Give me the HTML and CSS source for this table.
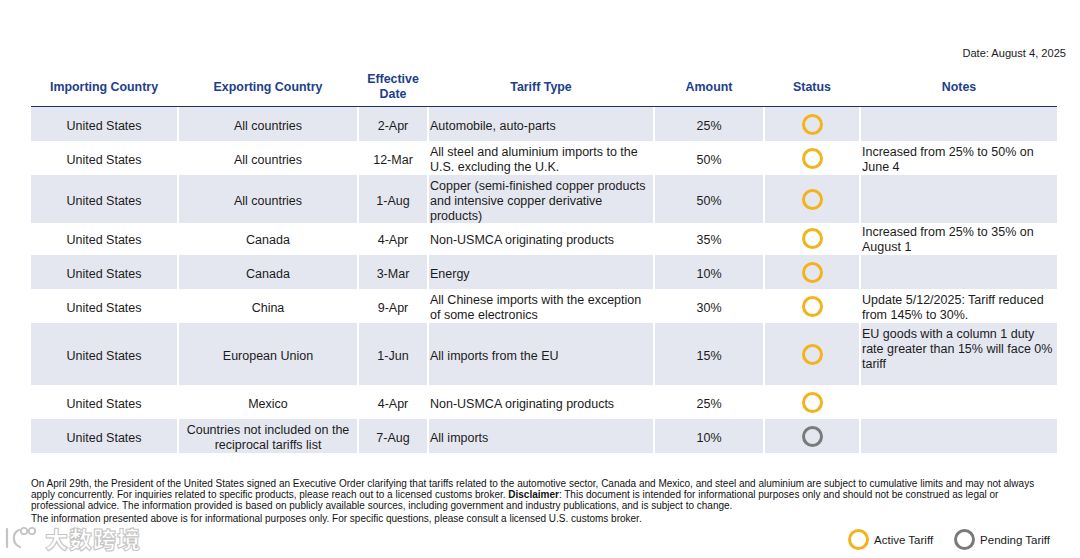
FILE: index.html
```html
<!DOCTYPE html>
<html lang="en">
<head>
<meta charset="utf-8">
<title>Tariff Tracker</title>
<link rel="stylesheet" href="styles.css">
</head>
<body>
<div class="page">
  <div class="date">Date: August 4, 2025</div>

  <div class="table">
    <div class="row head">
      <div class="cell">Importing Country</div>
      <div class="cell">Exporting Country</div>
      <div class="cell">Effective<br>Date</div>
      <div class="cell">Tariff Type</div>
      <div class="cell">Amount</div>
      <div class="cell">Status</div>
      <div class="cell">Notes</div>
    </div>

    <div class="row shade h34">
      <div class="cell">United States</div>
      <div class="cell">All countries</div>
      <div class="cell">2-Apr</div>
      <div class="cell left">Automobile, auto-parts</div>
      <div class="cell">25%</div>
      <div class="cell st"><span class="dot"></span></div>
      <div class="cell left"></div>
    </div>

    <div class="row h34">
      <div class="cell">United States</div>
      <div class="cell">All countries</div>
      <div class="cell">12-Mar</div>
      <div class="cell left">All steel and aluminium imports to the<br>U.S. excluding the U.K.</div>
      <div class="cell">50%</div>
      <div class="cell st"><span class="dot"></span></div>
      <div class="cell left">Increased from 25% to 50% on<br>June 4</div>
    </div>

    <div class="row shade h46">
      <div class="cell">United States</div>
      <div class="cell">All countries</div>
      <div class="cell">1-Aug</div>
      <div class="cell left">Copper (semi-finished copper products<br>and intensive copper derivative<br>products)</div>
      <div class="cell">50%</div>
      <div class="cell st"><span class="dot"></span></div>
      <div class="cell left"></div>
    </div>

    <div class="row h34">
      <div class="cell">United States</div>
      <div class="cell">Canada</div>
      <div class="cell">4-Apr</div>
      <div class="cell left">Non-USMCA originating products</div>
      <div class="cell">35%</div>
      <div class="cell st"><span class="dot"></span></div>
      <div class="cell left">Increased from 25% to 35% on<br>August 1</div>
    </div>

    <div class="row shade h34">
      <div class="cell">United States</div>
      <div class="cell">Canada</div>
      <div class="cell">3-Mar</div>
      <div class="cell left">Energy</div>
      <div class="cell">10%</div>
      <div class="cell st"><span class="dot"></span></div>
      <div class="cell left"></div>
    </div>

    <div class="row h34">
      <div class="cell">United States</div>
      <div class="cell">China</div>
      <div class="cell">9-Apr</div>
      <div class="cell left">All Chinese imports with the exception<br>of some electronics</div>
      <div class="cell">30%</div>
      <div class="cell st"><span class="dot"></span></div>
      <div class="cell left">Update 5/12/2025: Tariff reduced<br>from 145% to 30%.</div>
    </div>

    <div class="row shade h62">
      <div class="cell">United States</div>
      <div class="cell">European Union</div>
      <div class="cell">1-Jun</div>
      <div class="cell left">All imports from the EU</div>
      <div class="cell">15%</div>
      <div class="cell st"><span class="dot"></span></div>
      <div class="cell left top">EU goods with a column 1 duty<br>rate greater than 15% will face 0%<br>tariff</div>
    </div>

    <div class="row h34">
      <div class="cell">United States</div>
      <div class="cell">Mexico</div>
      <div class="cell">4-Apr</div>
      <div class="cell left">Non-USMCA originating products</div>
      <div class="cell">25%</div>
      <div class="cell st"><span class="dot"></span></div>
      <div class="cell left"></div>
    </div>

    <div class="row shade h34">
      <div class="cell">United States</div>
      <div class="cell">Countries not included on the<br>reciprocal tariffs list</div>
      <div class="cell">7-Aug</div>
      <div class="cell left">All imports</div>
      <div class="cell">10%</div>
      <div class="cell st"><span class="dot pending"></span></div>
      <div class="cell left"></div>
    </div>
  </div>

  <div class="footer">
    <p>On April 29th, the President of the United States signed an Executive Order clarifying that tariffs related to the automotive sector, Canada and Mexico, and steel and aluminium are subject to cumulative limits and may not always<br>apply concurrently. For inquiries related to specific products, please reach out to a licensed customs broker. <b>Disclaimer</b>: This document is intended for informational purposes only and should not be construed as legal or<br>professional advice. The information provided is based on publicly available sources, including government and industry publications, and is subject to change.</p>
    <p class="second">The information presented above is for informational purposes only. For specific questions, please consult a licensed U.S. customs broker.</p>
  </div>

  <div class="legend">
    <div class="legend-item"><span class="dot"></span><span>Active Tariff</span></div>
    <div class="legend-item"><span class="dot pending"></span><span>Pending Tariff</span></div>
  </div>
</div>

<div class="watermark">
  <svg class="wm-logo" width="36" height="26" viewBox="0 0 36 26">
    <path d="M4 4 L4 22" fill="none" stroke="#c4c4c4" stroke-width="2.2" stroke-linecap="round"/>
    <path d="M16 5 C9 8 9 19 17 22" fill="none" stroke="#c4c4c4" stroke-width="2.2" stroke-linecap="round"/>
    <circle cx="21" cy="6" r="3.2" fill="none" stroke="#c4c4c4" stroke-width="1.8"/>
    <circle cx="29" cy="6" r="3.2" fill="none" stroke="#c4c4c4" stroke-width="1.8"/>
  </svg>
  <span class="wm-text">大数跨境</span>
</div>
</body>
</html>
```

FILE: styles.css
```css
* { box-sizing: border-box; }

html, body {
  margin: 0;
  padding: 0;
  background: #ffffff;
}

body {
  font-family: "Liberation Sans", Arial, sans-serif;
  color: #1b1b1b;
  width: 1080px;
  height: 558px;
  position: relative;
  overflow: hidden;
}

.page {
  padding: 46px 14px 0 31px;
}

.date {
  text-align: right;
  font-size: 11.1px;
  line-height: 14px;
  height: 14px;
  color: #1b1b1b;
}

.table {
  width: 1026px;
  margin-top: 6px;
}

.row {
  display: grid;
  grid-template-columns: 146px 178px 68px 224px 108px 94px 196px;
  column-gap: 2px;
}

.cell {
  display: flex;
  align-items: center;
  justify-content: center;
  text-align: center;
  font-size: 12.5px;
  line-height: 14.8px;
  white-space: nowrap;
  padding-top: 4px;
}

.cell.st {
  padding-top: 0;
}

.cell.left {
  justify-content: flex-start;
  text-align: left;
  padding-left: 1px;
}

.cell.top {
  align-items: flex-start;
  padding-top: 4px;
}

.head {
  height: 41px;
  border-bottom: 1.5px solid #1f2f5e;
}

.head .cell {
  font-weight: bold;
  font-size: 12.4px;
  line-height: 15px;
  color: #213e8c;
  padding-top: 2px;
}

.h34 { height: 34px; }
.h46 { height: 46px; }
.h62 { height: 62px; }

.shade .cell {
  background: #e5e7f0;
}

.dot {
  display: inline-block;
  width: 21px;
  height: 21px;
  border: 3px solid #f2b31c;
  border-radius: 50%;
  flex: none;
}

.dot.pending {
  border-color: #7a7a7a;
}

.footer {
  margin-top: 25px;
  font-size: 10px;
  line-height: 11px;
  color: #111111;
  white-space: nowrap;
}

.footer p {
  margin: 0;
}

.footer p.second {
  margin-top: 2px;
}

.legend {
  display: flex;
  justify-content: flex-end;
  gap: 21px;
  margin-top: 5px;
  margin-right: 16px;
}

.legend-item {
  display: flex;
  align-items: center;
  gap: 5px;
  font-size: 11.5px;
  line-height: 14px;
  color: #1b1b1b;
}

.watermark {
  position: absolute;
  left: 3px;
  top: 524px;
  display: flex;
  align-items: center;
  gap: 6px;
}

.wm-text {
  font-family: "Noto Sans CJK SC", sans-serif;
  font-weight: 900;
  font-size: 23px;
  line-height: 28px;
  color: rgba(255, 255, 255, 0.85);
  -webkit-text-stroke: 1px #c4c4c4;
  letter-spacing: 1px;
}
```
